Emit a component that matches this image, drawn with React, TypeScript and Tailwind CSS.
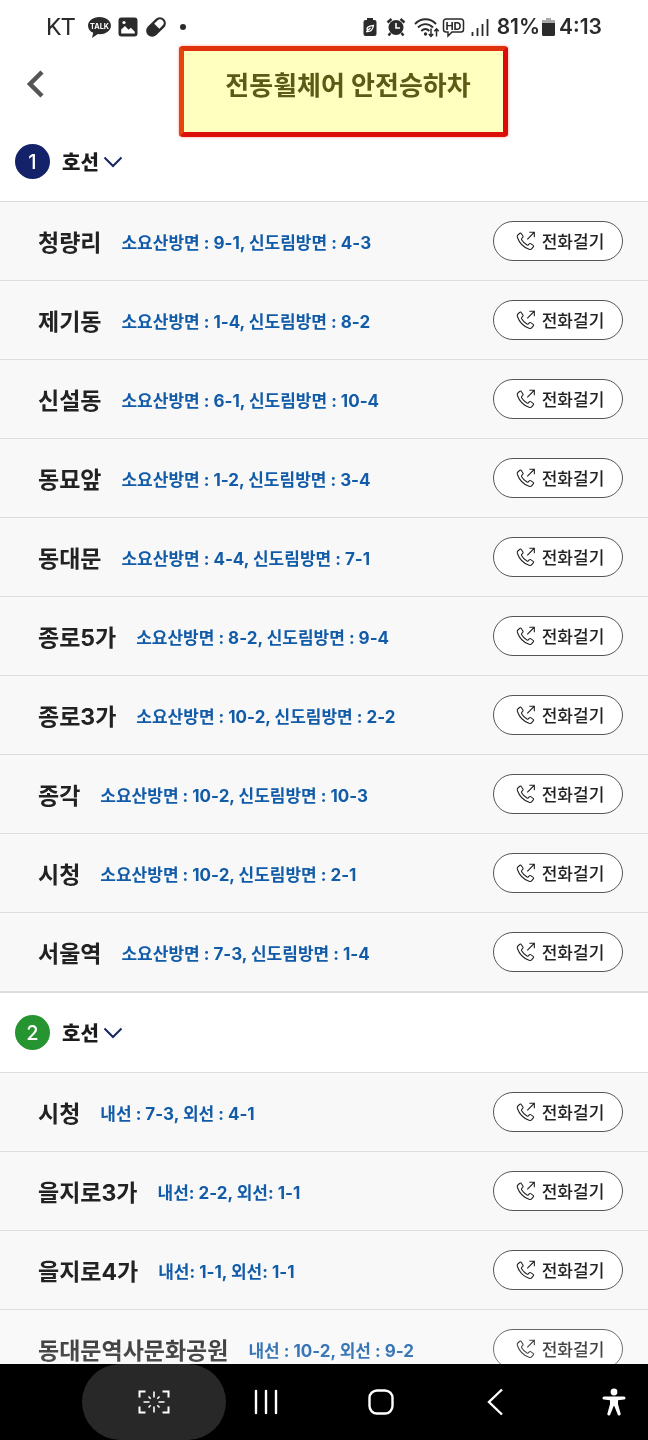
import { useState } from "react";

interface Station {
  name: string;
  doors: string;
}

interface SubwayLine {
  number: number;
  badge: string;
  stations: Station[];
}

const lines: SubwayLine[] = [
  {
    number: 1,
    badge: "bg-[#14226a]",
    stations: [
      { name: "청량리", doors: "소요산방면 : 9-1, 신도림방면 : 4-3" },
      { name: "제기동", doors: "소요산방면 : 1-4, 신도림방면 : 8-2" },
      { name: "신설동", doors: "소요산방면 : 6-1, 신도림방면 : 10-4" },
      { name: "동묘앞", doors: "소요산방면 : 1-2, 신도림방면 : 3-4" },
      { name: "동대문", doors: "소요산방면 : 4-4, 신도림방면 : 7-1" },
      { name: "종로5가", doors: "소요산방면 : 8-2, 신도림방면 : 9-4" },
      { name: "종로3가", doors: "소요산방면 : 10-2, 신도림방면 : 2-2" },
      { name: "종각", doors: "소요산방면 : 10-2, 신도림방면 : 10-3" },
      { name: "시청", doors: "소요산방면 : 10-2, 신도림방면 : 2-1" },
      { name: "서울역", doors: "소요산방면 : 7-3, 신도림방면 : 1-4" },
    ],
  },
  {
    number: 2,
    badge: "bg-[#279432]",
    stations: [
      { name: "시청", doors: "내선 : 7-3, 외선 : 4-1" },
      { name: "을지로3가", doors: "내선: 2-2, 외선: 1-1" },
      { name: "을지로4가", doors: "내선: 1-1, 외선: 1-1" },
      { name: "동대문역사문화공원", doors: "내선 : 10-2, 외선 : 9-2" },
    ],
  },
];

function StatusBar() {
  return (
    <div className="flex h-[46px] shrink-0 items-center justify-between px-[46px] pt-2 text-[#2b2b2b]">
      <div className="flex items-center">
        <span className="font-[Roboto] text-2xl leading-7">KT</span>
        <svg className="ml-3 h-[23px] w-[25px]" viewBox="0 0 24 22" aria-hidden="true">
          <path fill="currentColor" d="M12 1C5.8 1 1 4.6 1 9.2c0 3 2 5.500 5 6.900L4.800 21l5.600-3.700 1.600.1c6.200 0 11-3.600 11-8.200S18.200 1 12 1Z" />
          <text x="12" y="12" fill="#fff" fontSize="7" fontWeight="700" textAnchor="middle" fontFamily="Inter">TALK</text>
        </svg>
        <svg className="ml-1.5 h-5 w-5" viewBox="0 0 20 20" aria-hidden="true">
          <rect x="0.500" y="0.500" width="19" height="19" rx="3" fill="currentColor" />
          <path fill="#fff" d="M3.200 16.500v-4L7 9l3.600 3.800 2.200-2 4 4v1.700Z" />
          <circle cx="6" cy="5.500" r="1.600" fill="#fff" />
        </svg>
        <svg className="ml-1.5 h-6 w-6" viewBox="0 0 22 22" aria-hidden="true">
          <g transform="rotate(-45 11 11)">
            <rect x="0.500" y="5.500" width="21" height="11" rx="5.500" fill="currentColor" />
            <path d="M12 7.700h4.200a3.300 3.300 0 0 1 0 6.600H12Z" fill="#fff" />
          </g>
        </svg>
        <span className="ml-3 h-1.5 w-1.5 rounded-full bg-current" />
      </div>
      <div className="flex items-center">
        <svg className="h-5 w-4" viewBox="0 0 16 20" aria-hidden="true">
          <path fill="currentColor" d="M5 1h6v2h1.500A2 2 0 0 1 14.500 5v12a2 2 0 0 1-2 2h-9a2 2 0 0 1-2-2V5a2 2 0 0 1 2-2H5Z" />
          <path d="M4 14.500c3 .5 6.500-.5 7.500-6-5 .5-7.500 2-6 5l3-2.500" fill="none" stroke="#fff" strokeWidth="1.300" />
        </svg>
        <svg className="ml-2 h-5 w-5" viewBox="0 0 20 20" aria-hidden="true">
          <circle cx="10" cy="10.500" r="7.500" fill="currentColor" />
          <path d="M1.500 5.500 5.500 2M18.500 5.500 14.500 2M4.500 16 2.500 18.500M15.500 16l2 2.500" stroke="currentColor" strokeWidth="2.400" />
          <path d="M10 6v5h4" fill="none" stroke="#fff" strokeWidth="1.600" />
        </svg>
        <svg className="ml-2 h-[22px] w-[26px]" viewBox="0 0 26 22" aria-hidden="true">
          <g fill="none" stroke="currentColor" strokeWidth="1.900">
            <path d="M1 8c6-6.300 15-6.300 21 0M4 11.500c4.500-4.500 10.500-4.500 15 0M7.300 15c2.600-2.600 5.600-2.600 8 0" />
            <path strokeWidth="1.500" d="M17 12.500V20M14.800 18l2.200 2.300 2.200-2.300M22.500 20.500V13M20.300 15.200l2.200-2.300 2.200 2.300" />
          </g>
          <circle cx="11.500" cy="18" r="1.700" fill="currentColor" />
        </svg>
        <svg className="ml-0.5 h-[22px] w-[23px]" viewBox="0 0 23 22" aria-hidden="true">
          <path d="M4 3h15a2.500 2.500 0 0 1 2.500 2.500v8A2.500 2.500 0 0 1 19 16H10l-4 4v-4H4a2.500 2.500 0 0 1-2.500-2.500v-8A2.500 2.500 0 0 1 4 3Z" fill="none" stroke="currentColor" strokeWidth="1.500" />
          <text x="11.500" y="13.500" fill="currentColor" fontSize="11" fontWeight="700" textAnchor="middle" fontFamily="Inter">HD</text>
        </svg>
        <svg className="ml-1.5 h-[18px] w-[18px]" viewBox="0 0 18 18" aria-hidden="true">
          <path d="M1.500 14v4M6.500 10v8M11.500 6v12M16.500 1v17" stroke="currentColor" strokeWidth="1.800" />
        </svg>
        <span className="ml-2 font-[Inter] text-[21px] leading-7 font-semibold">81%</span>
        <svg className="ml-0.5 h-[18px] w-[13px]" viewBox="0 0 13 18" aria-hidden="true">
          <path d="M4 0h5v2h4v4H0V2h4Z" fill="#aaa" />
          <path d="M0 5h13v11.500a1.500 1.500 0 0 1-1.500 1.500h-10A1.500 1.500 0 0 1 0 16.500Z" fill="currentColor" />
        </svg>
        <span className="ml-1 font-[Inter] text-[21px] leading-7 font-semibold">4:13</span>
      </div>
    </div>
  );
}

function CallIcon() {
  return (
    <svg className="h-5 w-5" viewBox="0 0 24 24" fill="none" stroke="currentColor" strokeWidth="1.300" aria-hidden="true">
      <path d="M2.500 4.500 4.700 2.700c.6-.4 1.200-.3 1.600.3l2 3c.4.6.3 1.200-.2 1.700L6.900 8.900c-.5.5-.5 1-.1 1.600 1.500 2.700 3.600 4.800 6.400 6.400.6.3 1.100.3 1.500-.2l1.200-1.300c.5-.5 1.100-.6 1.700-.2l3 2c.6.4.7 1 .3 1.600l-1.900 2.400c-.8 1-2 1.300-3.300.8C9 19.600 4 14.400 1.700 7.800 1.200 6.500 1.500 5.300 2.500 4.500Z" />
      <path d="m13.500 10 8.500-8.500M16 1.500h6v6" />
    </svg>
  );
}

function StationRow({ station }: { station: Station }) {
  return (
    <li className="flex items-center justify-between border-b border-[#dcdcdc] bg-[#f8f8f8] py-[19px] pr-[25px] pl-[38px]">
      <div className="flex items-center gap-5 pt-1 whitespace-nowrap">
        <span className="text-[23px] leading-8 font-bold text-[#222]">{station.name}</span>
        <span className="text-[17px] leading-6 font-bold text-[#115ba8]">{station.doors}</span>
      </div>
      <button
        type="button"
        className="flex h-10 w-[130px] shrink-0 items-center justify-center gap-1.5 rounded-full border border-[#555] bg-white pl-1 text-[#222]"
      >
        <CallIcon />
        <span className="font-['Noto_Sans_CJK_KR',sans-serif] text-[17px] leading-6 font-medium">전화걸기</span>
      </button>
    </li>
  );
}

function LineSection({ line }: { line: SubwayLine }) {
  const [open, setOpen] = useState(true);

  return (
    <section className="border-b border-[#dcdcdc]">
      <h2>
        <button
          type="button"
          aria-expanded={open}
          onClick={() => setOpen(!open)}
          className="flex h-20 w-full items-center border-b border-[#dcdcdc] pl-[15px]"
        >
          <span className={`flex h-[35px] w-[35px] items-center justify-center rounded-full text-xl leading-6 font-medium text-white ${line.badge}`}>
            {line.number}
          </span>
          <span className="ml-3 pt-0.5 text-xl leading-8 font-black text-[#1c1c1c]">호선</span>
          <svg className="ml-1 h-3 w-5" viewBox="0 0 20 12" fill="none" stroke="#17275f" strokeWidth="2" aria-hidden="true">
            <path d="m1.500 1.500 8.500 8.500 8.500-8.500" />
          </svg>
        </button>
      </h2>
      {open && (
        <ul>
          {line.stations.map((station) => (
            <StationRow key={station.name} station={station} />
          ))}
        </ul>
      )}
    </section>
  );
}

function NavigationBar() {
  return (
    <nav className="flex h-[76px] shrink-0 items-center bg-black pr-5 pl-[82px] text-white">
      <button type="button" aria-label="화면 캡처" className="flex h-full w-36 items-center justify-center rounded-full bg-[#282828]">
        <svg className="h-6 w-8" viewBox="0 0 32 24" fill="none" stroke="currentColor" strokeWidth="2" aria-hidden="true">
          <path d="M1.500 7.500v-6h6M24.500 1.500h6v6M30.500 16.500v6h-6M7.500 22.500h-6v-6" />
          <path strokeWidth="1.600" d="M16 1.500v6M16 16.500v6M5.500 12h6M20.500 12h6M10.500 6.500l2.200 2.200M21.500 6.500l-2.200 2.200M10.500 17.500l2.200-2.200M21.500 17.500l-2.200-2.200" />
        </svg>
      </button>
      <div className="flex flex-1 items-center justify-between pl-[26px]">
        <button type="button" aria-label="최근 앱" className="flex w-7 justify-center">
          <svg className="h-[26px] w-6" viewBox="0 0 24 26" stroke="currentColor" strokeWidth="2.400" strokeLinecap="round" aria-hidden="true">
            <path d="M2 2v22M12 2v22M22 2v22" />
          </svg>
        </button>
        <button type="button" aria-label="홈" className="flex w-7 justify-center">
          <svg className="h-[26px] w-[26px]" viewBox="0 0 26 26" fill="none" stroke="currentColor" strokeWidth="2.400" aria-hidden="true">
            <rect x="1.500" y="1.500" width="23" height="23" rx="7.500" />
          </svg>
        </button>
        <button type="button" aria-label="뒤로" className="flex w-7 justify-center">
          <svg className="h-7 w-4" viewBox="0 0 16 28" fill="none" stroke="currentColor" strokeWidth="2.400" aria-hidden="true">
            <path d="M15 1.500 2 14l13 12.500" />
          </svg>
        </button>
        <button type="button" aria-label="접근성" className="flex w-8 justify-end pr-0.5">
          <svg className="h-7 w-6" viewBox="0 0 24 28" fill="currentColor" aria-hidden="true">
            <circle cx="12" cy="4" r="3.400" />
            <path d="M2 8.500h20a1.500 1.500 0 0 1 0 3l-6 .8v4l2.600 9.300a1.500 1.500 0 0 1-2.900.9L12.300 18h-.6l-3.400 8.500a1.500 1.500 0 0 1-2.900-.9L8 16.300v-4l-6-.8a1.500 1.500 0 0 1 0-3Z" />
          </svg>
        </button>
      </div>
    </nav>
  );
}

export default function App() {
  return (
    <div className="flex h-screen flex-col bg-white font-[Inter,'Noto_Sans_CJK_KR',sans-serif]">
      <StatusBar />
      <header className="relative flex h-[76px] shrink-0 items-center pl-[26px]">
        <button type="button" aria-label="이전 화면" className="text-[#555]">
          <svg className="h-7 w-[18px]" viewBox="0 0 18 28" fill="none" stroke="currentColor" strokeWidth="4.500" aria-hidden="true">
            <path d="M16 2 4 14l12 12" />
          </svg>
        </button>
        <h1 className="flex-1 pt-1 pl-1 text-center text-[26px] leading-9 font-bold text-[#5c5a1c]">전동휠체어 안전승하차</h1>
        {/* highlighted title area */}
        <div className="pointer-events-none absolute inset-x-0 top-0 flex justify-center pr-0.5 pl-10 mix-blend-multiply">
          <div className="h-[91px] w-[329px] rounded-sm border-[5px] border-t-[#e0300c] border-r-[#dc0a08] border-b-[#dc1008] border-l-[#e4450c] bg-[#ffffc0] shadow-[0_0_3px_#ff9c8c]" />
        </div>
      </header>
      <main className="relative min-h-0 flex-1 overflow-hidden">
        {lines.map((line) => (
          <LineSection key={line.number} line={line} />
        ))}
        <div className="pointer-events-none absolute inset-x-0 bottom-0 h-20 bg-linear-to-b from-white/0 to-white/20" />
      </main>
      <NavigationBar />
    </div>
  );
}
